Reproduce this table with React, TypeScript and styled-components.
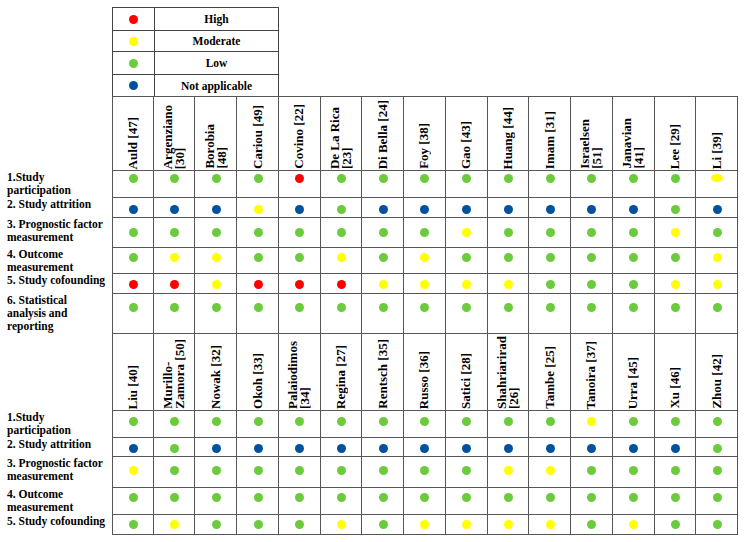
import styled, { createGlobalStyle } from "styled-components";

const GlobalStyle = createGlobalStyle`
  body {
    margin: 0;
    background: #fff;
  }
`;

const colors: Record<string, string> = {
  R: "#ff0000",
  Y: "#ffff00",
  O: "#ffff00",
  G: "#6bcb3d",
  B: "#00529f",
};

const Page = styled.div`
  width: 744px;
  height: 542px;
  padding-top: 7px;
  box-sizing: border-box;
  font-family: "Liberation Serif", "Times New Roman", serif;
  font-weight: bold;
  color: #000;
`;

const Legend = styled.div`
  margin-left: 112px;
  width: 167px;
  display: grid;
  grid-template-columns: 42px 125px;
`;

const LegendKey = styled.div<{ $h: number }>`
  height: ${(p) => p.$h}px;
  box-sizing: border-box;
  border-top: 1px solid #444;
  border-left: 1px solid #444;
  display: flex;
  align-items: center;
  justify-content: center;
`;

const LegendText = styled(LegendKey)`
  border-right: 1px solid #444;
  font-size: 11.5px;
`;

const Dot = styled.span<{ $c: string }>`
  display: block;
  width: ${(p) => (p.$c === "O" ? 12 : 9)}px;
  height: ${(p) => (p.$c === "O" ? 8 : 9)}px;
  border-radius: 50%;
  background: ${(p) => colors[p.$c]};
`;

const Row = styled.div<{ $h: number }>`
  width: 738px;
  height: ${(p) => p.$h}px;
  display: grid;
  grid-template-columns: 112px repeat(15, 1fr);
`;

const Label = styled.div`
  padding-left: 7px;
  font-size: 11.5px;
  line-height: 13px;
  white-space: pre-line;
`;

const Cell = styled.div<{ $top?: boolean }>`
  box-sizing: border-box;
  border-right: 1px solid #555;
  border-bottom: 1px solid #555;
  border-top: ${(p) => (p.$top ? "1px solid #555" : "none")};
  &:nth-child(2) {
    border-left: 1px solid #555;
  }
`;

const HeadCell = styled(Cell)`
  display: flex;
  align-items: flex-end;
  justify-content: center;
  padding-bottom: 1px;
`;

const Name = styled.div`
  writing-mode: vertical-rl;
  transform: rotate(180deg);
  font-size: 13px;
  line-height: 12px;
  white-space: pre;
`;

const DotCell = styled(Cell)<{ $pt: number }>`
  display: flex;
  justify-content: center;
  align-items: flex-start;
  padding-top: ${(p) => p.$pt}px;
  padding-left: 1px;
`;

interface IRow {
  label: string;
  h: number;
  pt: number;
  values: string;
}

interface IBlock {
  headH: number;
  top: boolean;
  names: string[];
  rows: IRow[];
}

const blocks: IBlock[] = [
  {
    headH: 75,
    top: true,
    names: [
      "Auld [47]",
      "Argenziano\n[30]",
      "Borobia\n[48]",
      "Cariou [49]",
      "Covino [22]",
      "De La Rica\n[23]",
      "Di Bella [24]",
      "Foy [38]",
      "Gao [43]",
      "Huang [44]",
      "Imam [31]",
      "Israelsen\n[51]",
      "Janavian\n[41]",
      "Lee [29]",
      "Li [39]",
    ],
    rows: [
      { label: "1.Study\nparticipation", h: 27, pt: 3, values: "GGGGRGGGGGGGGGO" },
      { label: "2. Study attrition", h: 20, pt: 7, values: "BBBYBGBBBBBBBGB" },
      { label: "3. Prognostic factor\nmeasurement", h: 30, pt: 10, values: "GGGGGGGGYGGGGYG" },
      { label: "4. Outcome\nmeasurement", h: 26, pt: 5, values: "GYYGGYGYGGGGGGY" },
      { label: "5. Study cofounding", h: 20, pt: 6, values: "RRYRRRYYYYGGGYY" },
      { label: "6. Statistical\nanalysis and\nreporting", h: 40, pt: 9, values: "GGGGGGGGGGGGGGG" },
    ],
  },
  {
    headH: 77,
    top: false,
    names: [
      "Liu [40]",
      "Murillo-\nZamora [50]",
      "Nowak [32]",
      "Okoh [33]",
      "Palaiodimos\n[34]",
      "Regina [27]",
      "Rentsch [35]",
      "Russo [36]",
      "Satici [28]",
      "Shahriarirad\n[26]",
      "Tambe [25]",
      "Tanoira [37]",
      "Urra [45]",
      "Xu [46]",
      "Zhou [42]",
    ],
    rows: [
      { label: "1.Study\nparticipation", h: 27, pt: 6, values: "GGGGGGGGGGGYGGG" },
      { label: "2. Study attrition", h: 19, pt: 6, values: "BGBBBBBBBBBBBBG" },
      { label: "3. Prognostic factor\nmeasurement", h: 31, pt: 9, values: "YGGGGGGGGYYGGGG" },
      { label: "4. Outcome\nmeasurement", h: 27, pt: 5, values: "GGGGGGGGGGGGGGG" },
      { label: "5. Study cofounding", h: 20, pt: 5, values: "GYGGGYGYYYYGYGG" },
    ],
  },
];

const legend = [
  { c: "R", text: "High", h: 23 },
  { c: "Y", text: "Moderate", h: 21 },
  { c: "G", text: "Low", h: 23 },
  { c: "B", text: "Not applicable", h: 22 },
];

function App() {
  return (
    <Page>
      <GlobalStyle />
      <Legend>
        {legend.map((l) => [
          <LegendKey key={l.c + "k"} $h={l.h}>
            <Dot $c={l.c} />
          </LegendKey>,
          <LegendText key={l.c + "t"} $h={l.h}>
            {l.text}
          </LegendText>,
        ])}
      </Legend>
      {blocks.map((b, bi) => (
        <div key={bi}>
          <Row $h={b.headH}>
            <Label />
            {b.names.map((n) => (
              <HeadCell key={n} $top={b.top}>
                <Name>{n}</Name>
              </HeadCell>
            ))}
          </Row>
          {b.rows.map((r) => (
            <Row key={r.label} $h={r.h}>
              <Label>{r.label}</Label>
              {r.values.split("").map((v, i) => (
                <DotCell key={i} $pt={r.pt}>
                  <Dot $c={v} />
                </DotCell>
              ))}
            </Row>
          ))}
        </div>
      ))}
    </Page>
  );
}

export default App;
